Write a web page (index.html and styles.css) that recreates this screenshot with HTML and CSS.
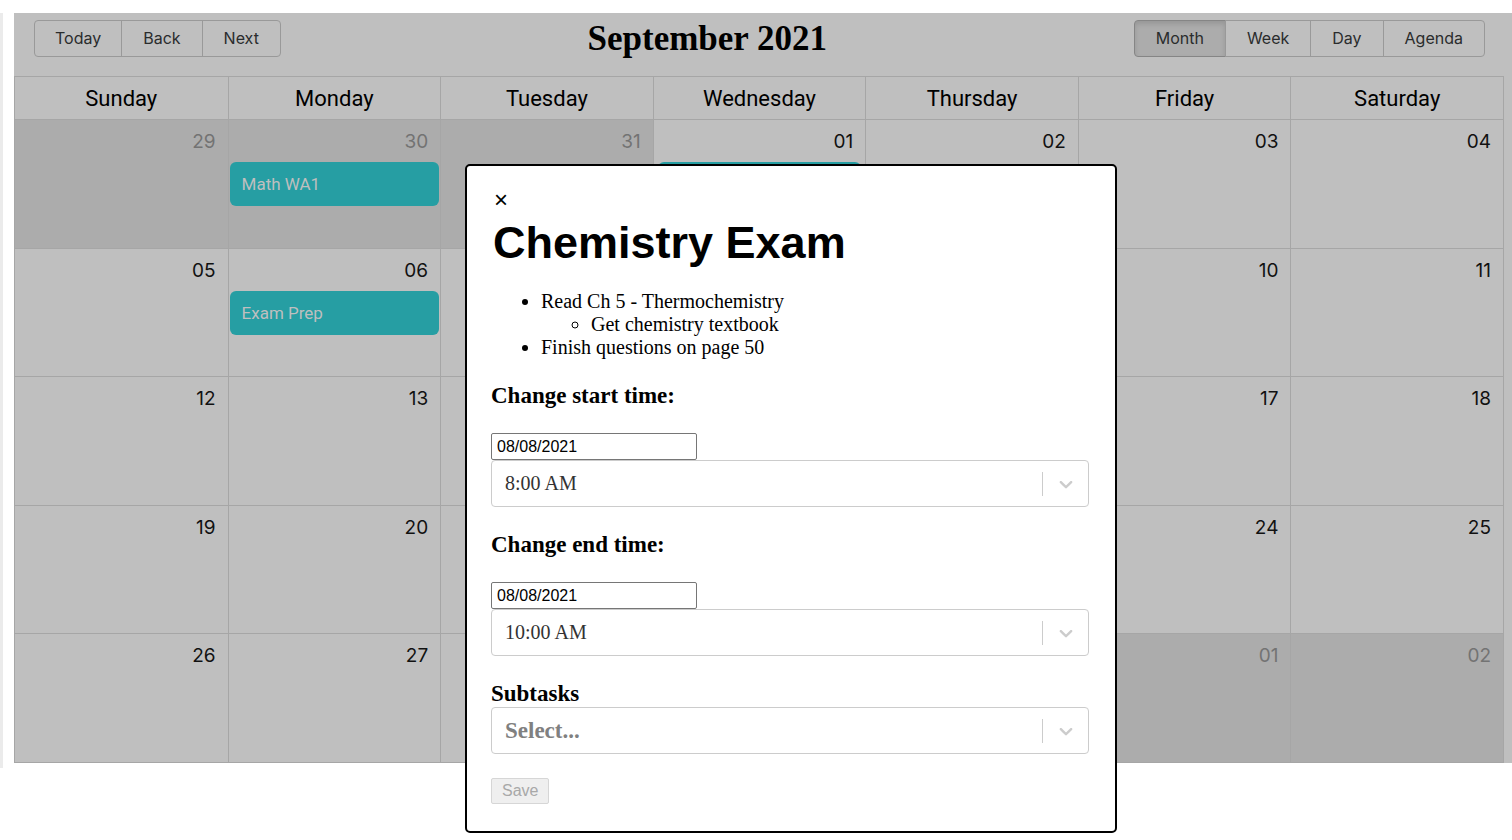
FILE: index.html
```html
<!DOCTYPE html>
<html lang="en">
<head>
<meta charset="utf-8">
<title>Calendar</title>
<link rel="stylesheet" href="styles.css">
</head>
<body>
<div class="page">
  <div class="sidebar"></div>
  <div class="app">
    <div class="calendar">
      <div class="toolbar">
        <div class="btn-group btn-group-left">
          <button class="btn">Today</button>
          <button class="btn">Back</button>
          <button class="btn">Next</button>
        </div>
        <div class="toolbar-label">September 2021</div>
        <div class="btn-group">
          <button class="btn active">Month</button>
          <button class="btn">Week</button>
          <button class="btn">Day</button>
          <button class="btn">Agenda</button>
        </div>
      </div>
      <div class="month">
        <div class="month-header">
          <div class="hdr">Sunday</div>
          <div class="hdr">Monday</div>
          <div class="hdr">Tuesday</div>
          <div class="hdr">Wednesday</div>
          <div class="hdr">Thursday</div>
          <div class="hdr">Friday</div>
          <div class="hdr">Saturday</div>
        </div>
        <div class="row">
          <div class="cell off"><div class="date">29</div></div>
          <div class="cell off"><div class="date">30</div><div class="event">Math WA1</div></div>
          <div class="cell off"><div class="date">31</div></div>
          <div class="cell"><div class="date">01</div><div class="event event-wide"></div></div>
          <div class="cell"><div class="date">02</div></div>
          <div class="cell"><div class="date">03</div></div>
          <div class="cell"><div class="date">04</div></div>
        </div>
        <div class="row">
          <div class="cell"><div class="date">05</div></div>
          <div class="cell"><div class="date">06</div><div class="event">Exam Prep</div></div>
          <div class="cell"><div class="date">07</div></div>
          <div class="cell"><div class="date">08</div></div>
          <div class="cell"><div class="date">09</div></div>
          <div class="cell"><div class="date">10</div></div>
          <div class="cell"><div class="date">11</div></div>
        </div>
        <div class="row">
          <div class="cell"><div class="date">12</div></div>
          <div class="cell"><div class="date">13</div></div>
          <div class="cell"><div class="date">14</div></div>
          <div class="cell"><div class="date">15</div></div>
          <div class="cell"><div class="date">16</div></div>
          <div class="cell"><div class="date">17</div></div>
          <div class="cell"><div class="date">18</div></div>
        </div>
        <div class="row">
          <div class="cell"><div class="date">19</div></div>
          <div class="cell"><div class="date">20</div></div>
          <div class="cell"><div class="date">21</div></div>
          <div class="cell"><div class="date">22</div></div>
          <div class="cell"><div class="date">23</div></div>
          <div class="cell"><div class="date">24</div></div>
          <div class="cell"><div class="date">25</div></div>
        </div>
        <div class="row">
          <div class="cell"><div class="date">26</div></div>
          <div class="cell"><div class="date">27</div></div>
          <div class="cell"><div class="date">28</div></div>
          <div class="cell"><div class="date">29</div></div>
          <div class="cell"><div class="date">30</div></div>
          <div class="cell off"><div class="date">01</div></div>
          <div class="cell off"><div class="date">02</div></div>
        </div>
      </div>
    </div>
  </div>
</div>

<div class="modal">
  <div class="close">&times;</div>
  <h1 class="title">Chemistry Exam</h1>
  <ul class="notes">
    <li>Read Ch 5 - Thermochemistry
      <ul>
        <li>Get chemistry textbook</li>
      </ul>
    </li>
    <li>Finish questions on page 50</li>
  </ul>

  <h3 class="heading">Change start time:</h3>
  <input class="date-input" type="text" value="08/08/2021">
  <div class="select">
    <div class="select-value">8:00 AM</div>
    <div class="sep"></div>
    <div class="indicator">
      <svg width="22" height="22" viewBox="0 0 20 20"><path fill="currentColor" d="M4.516 7.548c0.436-0.446 1.043-0.481 1.576 0l3.908 3.747 3.908-3.747c0.533-0.481 1.141-0.446 1.574 0 0.436 0.445 0.408 1.197 0 1.615-0.406 0.418-4.695 4.502-4.695 4.502-0.217 0.223-0.502 0.335-0.787 0.335s-0.57-0.112-0.789-0.335c0 0-4.287-4.084-4.695-4.502s-0.436-1.17 0-1.615z"/></svg>
    </div>
  </div>

  <h3 class="heading">Change end time:</h3>
  <input class="date-input" type="text" value="08/08/2021">
  <div class="select">
    <div class="select-value">10:00 AM</div>
    <div class="sep"></div>
    <div class="indicator">
      <svg width="22" height="22" viewBox="0 0 20 20"><path fill="currentColor" d="M4.516 7.548c0.436-0.446 1.043-0.481 1.576 0l3.908 3.747 3.908-3.747c0.533-0.481 1.141-0.446 1.574 0 0.436 0.445 0.408 1.197 0 1.615-0.406 0.418-4.695 4.502-4.695 4.502-0.217 0.223-0.502 0.335-0.787 0.335s-0.57-0.112-0.789-0.335c0 0-4.287-4.084-4.695-4.502s-0.436-1.17 0-1.615z"/></svg>
    </div>
  </div>

  <div class="subtasks-label">Subtasks</div>
  <div class="select">
    <div class="select-value placeholder">Select...</div>
    <div class="sep"></div>
    <div class="indicator">
      <svg width="22" height="22" viewBox="0 0 20 20"><path fill="currentColor" d="M4.516 7.548c0.436-0.446 1.043-0.481 1.576 0l3.908 3.747 3.908-3.747c0.533-0.481 1.141-0.446 1.574 0 0.436 0.445 0.408 1.197 0 1.615-0.406 0.418-4.695 4.502-4.695 4.502-0.217 0.223-0.502 0.335-0.787 0.335s-0.57-0.112-0.789-0.335c0 0-4.287-4.084-4.695-4.502s-0.436-1.17 0-1.615z"/></svg>
    </div>
  </div>

  <button class="save" disabled>Save</button>
</div>
</body>
</html>
```

FILE: styles.css
```css
html, body {
  margin: 0;
  padding: 0;
  background: #ffffff;
}

body {
  font-family: "Liberation Serif", serif;
}

.page {
  display: flex;
  align-items: flex-start;
}

.sidebar {
  width: 3px;
  height: 755px;
  margin-top: 13px;
  background: #ebebeb;
}

.app {
  margin: 13px 0 0 11px;
  width: 1498px;
  height: 750px;
  background: #bfbfbf;
}

.calendar {
  width: 1490px;
  height: 750px;
  display: flex;
  flex-direction: column;
}

/* toolbar */
.toolbar {
  height: 63px;
  flex: none;
  box-sizing: border-box;
  padding: 7px 19px 0 20px;
  display: flex;
  align-items: flex-start;
}

.btn-group {
  display: flex;
}

.btn {
  height: 37px;
  margin: 0;
  padding: 0 21px;
  border: 1px solid #999999;
  background: transparent;
  color: #2a2c2d;
  font-family: Inter, "Liberation Sans", sans-serif;
  font-size: 16px;
  line-height: 35px;
  border-radius: 0;
}

.btn-group-left .btn:first-child {
  padding: 0 20px;
}

.btn + .btn {
  margin-left: -1px;
}

.btn:first-child {
  border-radius: 4px 0 0 4px;
}

.btn:last-child {
  border-radius: 0 4px 4px 0;
}

.btn.active {
  background: #acacac;
  border-color: #858585;
  box-shadow: inset 0 3px 5px rgba(0, 0, 0, 0.125);
}

.toolbar-label {
  flex: 1;
  text-align: center;
  font-family: "Liberation Serif", serif;
  font-weight: bold;
  font-size: 35px;
  line-height: 37px;
  color: #000000;
}

/* month view */
.month {
  flex: 1;
  min-height: 0;
  box-sizing: border-box;
  border: 1px solid #a6a6a6;
  display: flex;
  flex-direction: column;
}

.month-header {
  flex: none;
  height: 43px;
  box-sizing: border-box;
  border-bottom: 1px solid #a6a6a6;
  display: grid;
  grid-template-columns: repeat(7, 1fr);
}

.hdr {
  display: flex;
  align-items: center;
  justify-content: center;
  font-family: Roboto, "Liberation Sans", sans-serif;
  font-size: 22px;
  color: #000000;
}

.hdr + .hdr {
  border-left: 1px solid #a6a6a6;
}

.row {
  flex: 1;
  min-height: 0;
  display: grid;
  grid-template-columns: repeat(7, 1fr);
}

.row + .row {
  border-top: 1px solid #a6a6a6;
}

.cell {
  min-width: 0;
  display: flex;
  flex-direction: column;
}

.cell + .cell {
  border-left: 1px solid #a6a6a6;
}

.cell.off {
  background: #acacac;
}

.date {
  padding: 10px 12px 10px 0;
  text-align: right;
  font-family: Inter, "Liberation Sans", sans-serif;
  font-size: 19px;
  line-height: 23px;
  color: #111111;
}

.cell.off .date {
  color: #737373;
}

.event {
  height: 44px;
  margin: -1px 1px 0;
  padding: 0 12px;
  border-radius: 6px;
  background: #269ea3;
  color: #bfbfbf;
  font-family: Roboto, "Liberation Sans", sans-serif;
  font-size: 17px;
  display: flex;
  align-items: center;
  white-space: nowrap;
  overflow: hidden;
}

.event-wide {
  margin: -1px 4px 0;
}

/* modal */
.modal {
  position: absolute;
  left: 465px;
  top: 164px;
  width: 652px;
  box-sizing: border-box;
  padding: 24px 26px 27px 24px;
  border: 2px solid #000000;
  border-radius: 5px;
  background: #ffffff;
  color: #000000;
  font-family: "Liberation Serif", serif;
}

.close {
  height: 20px;
  font-family: "Liberation Sans", sans-serif;
  font-size: 24px;
  line-height: 20px;
  padding-left: 3px;
}

.title {
  margin: 8px 0 0;
  padding-left: 2px;
  font-family: "Liberation Sans", sans-serif;
  font-weight: bold;
  font-size: 45px;
  line-height: 50px;
}

.notes {
  margin: 22px 0 0;
  padding-left: 50px;
  font-size: 20px;
  line-height: 23px;
}

.notes ul {
  margin: 0;
  padding-left: 50px;
}

.heading {
  margin: 24px 0 24px;
  font-family: "Liberation Serif", serif;
  font-weight: bold;
  font-size: 23px;
  line-height: 26px;
}

.select + .heading {
  margin-top: 25px;
}

.date-input {
  display: block;
  width: 206px;
  height: 27px;
  box-sizing: border-box;
  margin: 0;
  padding: 0 5px;
  border: 1px solid #767676;
  border-radius: 2px;
  font-family: "Liberation Sans", sans-serif;
  font-size: 16px;
  color: #000000;
  background: #ffffff;
}

.select {
  height: 47px;
  box-sizing: border-box;
  border: 1px solid #cccccc;
  border-radius: 4px;
  display: flex;
  align-items: stretch;
  background: #ffffff;
}

.select-value {
  flex: 1;
  display: flex;
  align-items: center;
  padding-left: 13px;
  font-size: 20px;
  color: #333333;
}

.select-value.placeholder {
  font-weight: bold;
  font-size: 23px;
  color: #808080;
}

.sep {
  width: 1px;
  margin: 11px 0 10px;
  background: #cccccc;
}

.indicator {
  display: flex;
  align-items: center;
  padding: 0 11px 0 12px;
  color: #cccccc;
}

.subtasks-label {
  margin-top: 25px;
  font-weight: bold;
  font-size: 23px;
  line-height: 26px;
}

.save {
  display: block;
  margin-top: 24px;
  height: 26px;
  padding: 0 10px;
  border: 1px solid #d6d6d6;
  border-radius: 2px;
  background: #efefef;
  color: #a8a8a8;
  font-family: "Liberation Sans", sans-serif;
  font-size: 16px;
}
```
